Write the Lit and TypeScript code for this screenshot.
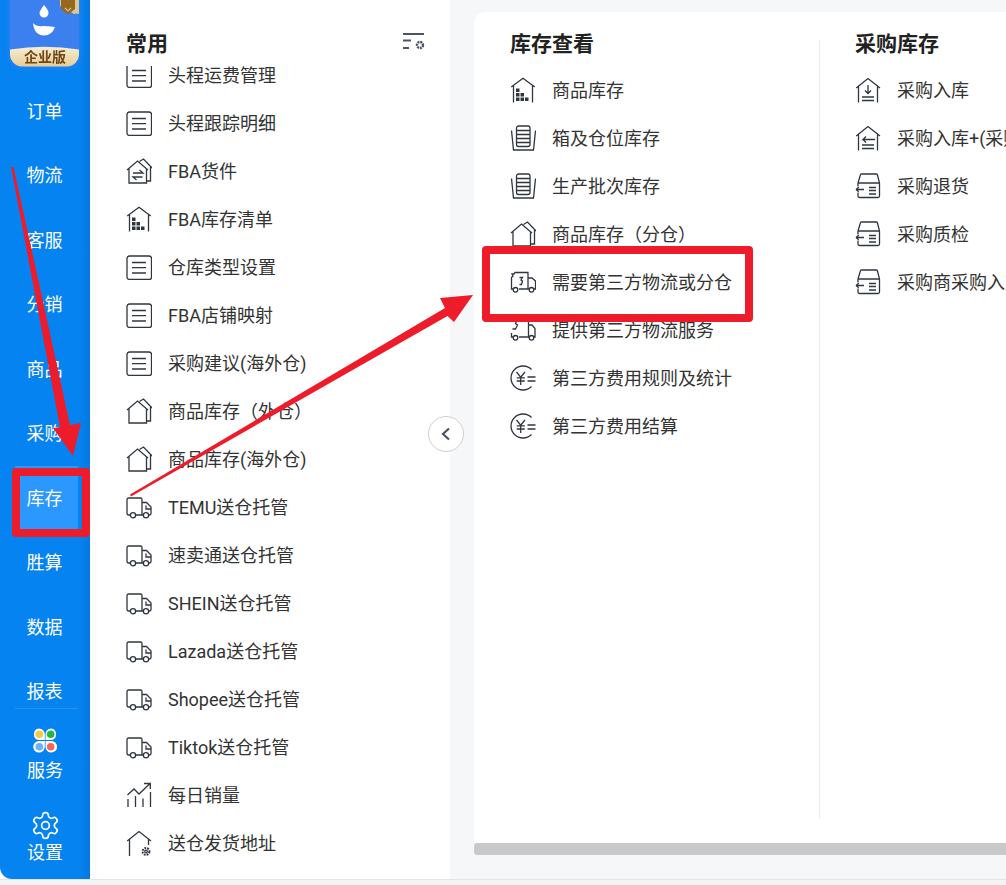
import { LitElement, html, svg, css } from "lit";
import { customElement } from "lit/decorators.js";

const doc = html`<svg class="ic" viewBox="0 0 26 26"><rect x="1" y="2" width="24.500" height="23.500" rx="2.500"/><path d="M6 8.500h14M6 13.700h14M6 19h14"/></svg>`;
const houseBack = svg`<path d="M1 12 11.500 3 22 12M3 10.500V25H20.500V10.500M13.500 3.500 17.500 1 26 10M24.500 9V23H20.500"/>`;
const houseDouble = html`<svg class="ic" viewBox="0 0 26 26">${houseBack}</svg>`;
const houseSwap = html`<svg class="ic" viewBox="0 0 26 26">${houseBack}<path d="M7 15h10l-3.500-3M16.500 19H7l3.500 3"/></svg>`;
const houseGrid = html`<svg class="ic" viewBox="0 0 26 26"><path d="M1.200 10 13 1.300 24.800 10M3.500 8.500V25.500M22.500 8.500V25.500"/><path class="f" d="M6 11.500h3.500V15H6zM6 16h3.500v3.500H6zM10.500 16H14v3.500h-3.500zM6 20.500h3.500V24H6zM10.500 20.500H14V24h-3.500zM15 20.500h3.500V24H15z"/></svg>`;
const truck = html`<svg class="ic" viewBox="0 0 26 26"><path d="M4.200 21H2.500A1.500 1.500 0 0 1 1 19.500V5.500A1.500 1.500 0 0 1 2.500 4h12A1.500 1.500 0 0 1 16 5.500V21H9.800M16 8.500h4.500l4.500 4.500v6.500a1.500 1.500 0 0 1-1.500 1.500h-.7M16 21h1.200M20 11.500v3.500h4.500"/><circle cx="7" cy="21.200" r="2.600"/><circle cx="20" cy="21.200" r="2.600"/></svg>`;
const chart = html`<svg class="ic" viewBox="0 0 26 26"><path d="M1.500 13 8 7l5 5L24 1.500M18 1.500h6.300V7M2 17v8M9.500 14v11M17 16.500V25M24.500 10V25"/></svg>`;
const houseGear = html`<svg class="ic" viewBox="0 0 26 26"><path d="M1.200 11 13 1.500 25 11M3.500 9.500V26M22.500 9.500V15"/><circle cx="20" cy="21.500" r="3.400" stroke-width="2" stroke-dasharray="1.800 1"/><circle cx="20" cy="21.500" r="1.300"/></svg>`;
const cup = html`<svg class="ic" viewBox="0 0 26 26"><path d="M1.500 5.500 3.500 25H23.500L25.500 5.500"/><rect x="6.500" y="1" width="13.500" height="20.500" rx="2"/><path d="M6.500 5.500h13.500M6.500 9.500h13.500M6.500 13.500h13.500M6.500 17.500h13.500"/></svg>`;
const truckNeed = html`<svg class="ic" viewBox="0 0 26 26"><path d="M3 20H1.500V8.500L3 7 2 5h2l1-1.500H18V20H9M18 9h4l3.500 3v8h-1.500M18 20h2M9.500 8.500h3l-1.500 2.500 1.500 1-1 3.500H9.500"/><circle cx="5.500" cy="20.800" r="2.300"/><circle cx="21.500" cy="20.800" r="2.300"/></svg>`;
const truckGive = html`<svg class="ic" viewBox="0 0 26 26"><path d="M3 20H1.500v-4M9 20h9.500V3M18.500 8h3.500l3 3.500V20h-1M18.500 20H20M2.500 3.500H7L5.500 6.500l2 1.500-2 4H2.500"/><circle cx="5.500" cy="20.800" r="2.300"/><circle cx="21.500" cy="20.800" r="2.300"/></svg>`;
const yen = html`<svg class="ic" viewBox="0 0 26 26"><path d="M21.500 4.500A12 12 0 1 0 21.500 21.500M6.500 7l4.200 5.200L15 7M10.700 12.200V20M6.800 12.800h8M6.800 16h8M17.500 12h8M17.500 16h8"/></svg>`;
const houseDown = html`<svg class="ic" viewBox="0 0 26 26"><path d="M1.200 11 13 1.500 25 11M3.500 9.500V25.500M22.500 9.500V25.500M13 8v8.500M10 13.500l3 3 3-3M7 20h12M7 23.500h12"/></svg>`;
const houseLeft = html`<svg class="ic" viewBox="0 0 26 26"><path d="M1.200 11 13 1.500 25 11M3.500 9.500V25.500M22.500 9.500V25.500M20 14.500H8l3-3M8 14.500l3 3M7 20h12M7 23.500h12"/></svg>`;
const boxLeft = html`<svg class="ic" viewBox="0 0 26 26"><path d="M3 10l2.500-8.500A1.500 1.500 0 0 1 7 1h14a1.500 1.500 0 0 1 1.500 1l2 8V23a1.500 1.500 0 0 1-1.500 1.500H4.500A1.500 1.500 0 0 1 3 23v-3.500M3 10h21.500M3 10v3.500M1 16.500h8M1 16.500l2.700-2.200M1 16.500l2.700 2.200M14 14.500h7M14 17.500h7M14 21h7"/></svg>`;

const NAV = ["订单", "物流", "客服", "分销", "商品", "采购", "库存", "胜算", "数据", "报表"];
const COMMON: [unknown, string][] = [
  [doc, "头程运费管理"], [doc, "头程跟踪明细"], [houseSwap, "FBA货件"], [houseGrid, "FBA库存清单"],
  [doc, "仓库类型设置"], [doc, "FBA店铺映射"], [doc, "采购建议(海外仓)"], [houseDouble, "商品库存（外仓）"],
  [houseDouble, "商品库存(海外仓)"], [truck, "TEMU送仓托管"], [truck, "速卖通送仓托管"], [truck, "SHEIN送仓托管"],
  [truck, "Lazada送仓托管"], [truck, "Shopee送仓托管"], [truck, "Tiktok送仓托管"], [chart, "每日销量"], [houseGear, "送仓发货地址"],
];
const STOCK: [unknown, string][] = [
  [houseGrid, "商品库存"], [cup, "箱及仓位库存"], [cup, "生产批次库存"], [houseDouble, "商品库存（分仓）"],
  [truckNeed, "需要第三方物流或分仓"], [truckGive, "提供第三方物流服务"], [yen, "第三方费用规则及统计"], [yen, "第三方费用结算"],
];
const PURCHASE: [unknown, string][] = [
  [houseDown, "采购入库"], [houseLeft, "采购入库+(采购单)"], [boxLeft, "采购退货"], [boxLeft, "采购质检"], [boxLeft, "采购商采购入库"],
];

@customElement("app-root")
export class AppRoot extends LitElement {
  static styles = css`
    :host {
      display: block; position: relative; width: 1006px; height: 885px; overflow: hidden;
      background: #f4f4f4; color: #333;
      font-family: "Roboto", "Noto Sans CJK SC", sans-serif;
    }
    .shell { display: flex; height: 879px; background: #fff; border-bottom: 1px solid #e2e4e8; box-sizing: content-box; }
    .side {
      width: 90px; flex: none; display: flex; flex-direction: column; color: #fff;
      background: linear-gradient(to right, #0583f1 88%, #0578e0);
      border-bottom-left-radius: 12px; overflow: hidden;
    }
    .logo-wrap { height: 78.500px; flex: none; padding: 0 11px 0 10px; box-sizing: border-box; }
    .logo { width: 69px; height: 66.500px; display: block; filter: drop-shadow(0 0 3px #3b80ee); }
    .logo text { font-size: 14px; font-weight: 700; fill: #6f4616; }
    .nav { height: 629.500px; flex: none; overflow: hidden; border-bottom: 1px solid #2a8fe6; margin: 0 12px 0 15px; }
    .nav-item {
      height: 64.500px; display: flex; align-items: center; justify-content: center;
      font-size: 18px; margin: 0 -12px 0 -15px; line-height: 1; color: #fff; box-sizing: border-box; padding: 2px 1px 0 0;
    }
    .nav-item.on { background: #2b98ff; }
    .foot { flex: 1; display: flex; flex-direction: column; align-items: center; }
    .foot-item { display: flex; flex-direction: column; align-items: center; font-size: 18px; line-height: 24px; }
    .svc { padding-top: 19px; }
    .svc svg { width: 24px; height: 25px; margin-bottom: 6px; display: block; }
    .cog { padding-top: 27px; }
    .cog svg { width: 31px; height: 31px; display: block; fill: none; stroke: #fff; stroke-width: 1.300; }

    .mid { width: 360px; flex: none; background: #fff; display: flex; flex-direction: column; padding-top: 22px; box-sizing: border-box; }
    .title { font-size: 21px; font-weight: 700; line-height: 44px; height: 44px; color: #222; flex: none; }
    .mid-head { display: flex; justify-content: space-between; align-items: flex-start; padding: 0 25px 0 36px; flex: none; height: 44px; }
    .mid-head svg { width: 22px; height: 18px; margin-top: 11px; stroke: #4c5566; fill: none; stroke-width: 1.800; }
    .clip { flex: 1; overflow: hidden; padding-left: 36px; }
    .clip-inner { margin-top: -15px; }
    .row { height: 48px; display: flex; align-items: center; gap: 16px; font-size: 18px; line-height: 1; color: #333; white-space: nowrap; }
    .row span { padding-top: 2px; }
    .ic { width: 26px; height: 26px; flex: none; fill: none; stroke: #30363f; stroke-width: 1.300; display: block; }
    .ic .f { fill: #30363f; stroke: none; }

    .right { flex: 1; min-width: 0; background: #f6f7f9; padding: 12px 0 24px 24px; box-sizing: border-box; display: flex; }
    .card { flex: 1; min-width: 0; background: #fff; border-top-left-radius: 12px; display: flex; flex-direction: column; overflow: hidden; }
    .cols { flex: 1; display: flex; padding: 10px 0 0 36px; overflow: hidden; }
    .col { flex: none; }
    .col.first { width: 309px; }
    .col.second { width: 300px; padding-left: 35px; }
    .rule { flex: none; width: 1px; height: 779px; margin-top: 18px; background: #e9ecf1; }
    .bar { flex: none; height: 12px; background: #c9c9c9; border-top-left-radius: 3px; border-bottom-left-radius: 3px; }

    .toggle {
      position: absolute; left: 428px; top: 416px; width: 36px; height: 36px; box-sizing: border-box;
      border: 1px solid #cfcfcf; border-radius: 50%; background: #fff; display: flex; align-items: center; justify-content: center;
    }
    .toggle svg { width: 12px; height: 14px; fill: none; stroke: #4c5566; stroke-width: 2.200; }
    .mark { position: absolute; box-sizing: border-box; border: 8px solid #ee1c2b; border-radius: 4px; }
    .mark.a { left: 12px; top: 468px; width: 78px; height: 69px; }
    .mark.b { left: 482px; top: 246px; width: 271px; height: 76px; }
    .arrows { position: absolute; left: 0; top: 0; width: 1006px; height: 885px; pointer-events: none; fill: #ee1c2b; }
  `;

  private rows(items: [unknown, string][]) {
    return items.map(([i, t]) => html`<div class="row">${i}<span>${t}</span></div>`);
  }

  render() {
    return html`
      <div class="shell">
        <aside class="side">
          <div class="logo-wrap">
            <svg class="logo" viewBox="0 0 69 66.500">
              <defs>
                <linearGradient id="gold" x1="0" y1="0" x2="0" y2="1">
                  <stop offset="0" stop-color="#f7eed2"/>
                  <stop offset="1" stop-color="#e6cd98"/>
                </linearGradient>
              </defs>
              <path d="M0 0H69V54a12 12 0 0 1-12 12.500H12A12 12 0 0 1 0 54Z" fill="#3b80ee"/>
              <path d="M0 49.500Q34.500 44 69 49.500V54a12 12 0 0 1-12 12.500H12A12 12 0 0 1 0 54Z" fill="url(#gold)"/>
              <path d="M50 0H69V14Q66 13 64 14L50 6Z" fill="#dcc793"/>
              <path d="M51 0H65V9L58 14.500 51 9Z" fill="#96671f"/>
              <path d="M55 8l3 3 3-3" fill="none" stroke="#d8c08a" stroke-width="1.200"/>
              <path d="M34 5Q39 11 38.500 13A4.500 4.500 0 0 1 29.500 13Q29.500 11 34 5Z" fill="#fff"/>
              <path d="M23 23Q27 27 33 26Q38 26 45 27Q42 35.500 34 35.500Q24 35 23 23Z" fill="#fff"/>
              <text x="14" y="62">企业版</text>
            </svg>
          </div>
          <div class="nav">
            ${NAV.map((n) => html`<div class="nav-item ${n === "库存" ? "on" : ""}">${n}</div>`)}
          </div>
          <div class="foot">
            <div class="foot-item svc">
              <svg viewBox="0 0 24 25">
                <g fill="#fff">
                  <path d="M6 .5a5.800 5.800 0 0 1 5.800 5.800V12H6A5.800 5.800 0 0 1 6 .5Z"/>
                  <path d="M18 .5a5.800 5.800 0 0 1 0 11.500H12.500V6.300A5.800 5.800 0 0 1 18 .5Z"/>
                  <path d="M6 13h5.800v5.800A5.800 5.800 0 1 1 6 13Z"/>
                  <path d="M12.500 13H18a5.800 5.800 0 1 1-5.500 5.800Z"/>
                </g>
                <circle cx="6.300" cy="6.300" r="3.800" fill="#f7c93e"/>
                <circle cx="17.700" cy="6.300" r="3.800" fill="#1fb84a"/>
                <circle cx="6.300" cy="18.700" r="3.800" fill="#6cb2ff"/>
                <circle cx="17.700" cy="18.700" r="3.800" fill="#f4665c"/>
              </svg>
              服务
            </div>
            <div class="foot-item cog">
              <svg viewBox="0 0 24 24">
                <path d="M12.220 2h-.44a2 2 0 0 0-2 2v.18a2 2 0 0 1-1 1.730l-.43.25a2 2 0 0 1-2 0l-.15-.08a2 2 0 0 0-2.730.73l-.22.380a2 2 0 0 0 .73 2.730l.15.100a2 2 0 0 1 1 1.720v.51a2 2 0 0 1-1 1.740l-.15.090a2 2 0 0 0-.73 2.730l.22.380a2 2 0 0 0 2.730.73l.15-.080a2 2 0 0 1 2 0l.43.250a2 2 0 0 1 1 1.730V20a2 2 0 0 0 2 2h.44a2 2 0 0 0 2-2v-.18a2 2 0 0 1 1-1.730l.43-.25a2 2 0 0 1 2 0l.15.080a2 2 0 0 0 2.730-.73l.22-.39a2 2 0 0 0-.73-2.730l-.15-.080a2 2 0 0 1-1-1.740v-.5a2 2 0 0 1 1-1.740l.15-.090a2 2 0 0 0 .73-2.730l-.22-.380a2 2 0 0 0-2.730-.73l-.15.080a2 2 0 0 1-2 0l-.43-.250a2 2 0 0 1-1-1.730V4a2 2 0 0 0-2-2Z"/>
                <circle cx="12" cy="12" r="3"/>
              </svg>
              设置
            </div>
          </div>
        </aside>
        <section class="mid">
          <div class="mid-head">
            <div class="title">常用</div>
            <svg viewBox="0 0 22 18">
              <path d="M0 1h21M0 7.500h8M0 15h6"/>
              <circle cx="17" cy="12" r="3" stroke-width="2.400" stroke-dasharray="2 .8"/>
            </svg>
          </div>
          <div class="clip"><div class="clip-inner">${this.rows(COMMON)}</div></div>
        </section>
        <section class="right">
          <div class="card">
            <div class="cols">
              <div class="col first">
                <div class="title">库存查看</div>
                ${this.rows(STOCK)}
              </div>
              <div class="rule"></div>
              <div class="col second">
                <div class="title">采购库存</div>
                ${this.rows(PURCHASE)}
              </div>
            </div>
            <div class="bar"></div>
          </div>
        </section>
      </div>
      <div class="toggle"><svg viewBox="0 0 12 14"><path d="M9 1.500 3 7l6 5.500"/></svg></div>
      <div class="mark a"></div>
      <div class="mark b"></div>
      <svg class="arrows" viewBox="0 0 1006 885">
        <polygon points="11,167 13.500,167 70,425 81,423 73,456 53,428 60,427"/>
        <polygon points="130,494.500 445,308 440,298 473,295 454,322 447.500,316 131,496.500"/>
      </svg>
    `;
  }
}
